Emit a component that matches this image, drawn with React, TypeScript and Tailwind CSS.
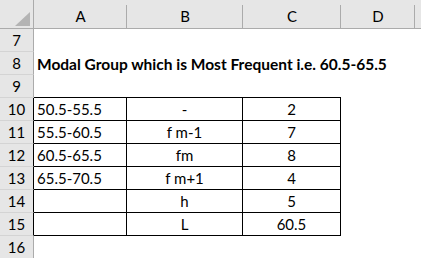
import React from "react";

const font = { fontFamily: "Lato, 'Liberation Sans', sans-serif" };

type Cell = { t?: string; align?: "l" | "c"; box?: boolean; bold?: boolean };

const rows: { n: number; cells: Cell[]; tableTop?: boolean }[] = [
  { n: 7, cells: [{}, {}, {}, {}] },
  { n: 8, cells: [{ t: "Modal Group which is Most Frequent i.e. 60.5-65.5", bold: true, align: "l" }, {}, {}, {}] },
  { n: 9, cells: [{}, {}, {}, {}], tableTop: true },
  { n: 10, cells: [{ t: "50.5-55.5", align: "l", box: true }, { t: "-", box: true }, { t: "2", box: true }, {}] },
  { n: 11, cells: [{ t: "55.5-60.5", align: "l", box: true }, { t: "f m-1", box: true }, { t: "7", box: true }, {}] },
  { n: 12, cells: [{ t: "60.5-65.5", align: "l", box: true }, { t: "fm", box: true }, { t: "8", box: true }, {}] },
  { n: 13, cells: [{ t: "65.5-70.5", align: "l", box: true }, { t: "f m+1", box: true }, { t: "4", box: true }, {}] },
  { n: 14, cells: [{ t: "", align: "l", box: true }, { t: "h", box: true }, { t: "5", box: true }, {}] },
  { n: 15, cells: [{ t: "", align: "l", box: true }, { t: "L", box: true }, { t: "60.5", box: true }, {}] },
  { n: 16, cells: [{}, {}, {}, {}] },
];

const widths = ["w-[93px]", "w-[116px]", "w-[98px]", "w-[74px]"];

export default function App() {
  return (
    <div className="w-[421px] h-[258px] overflow-hidden bg-white text-black" style={font}>
      {/* header */}
      <div className="flex h-[29px] bg-[#e6e6e6] border-b border-[#ababab]">
        <div className="w-[34px] h-[28px] shrink-0 border-r border-[#ababab] relative">
          <svg className="absolute left-[15px] top-[12px]" width="15" height="14" viewBox="0 0 15 14">
            <polygon points="15,0 15,14 0,14" fill="#b4b4b4" />
          </svg>
        </div>
        {["A", "B", "C", "D"].map((c, i) => (
          <div
            key={c}
            className={`${widths[i]} shrink-0 h-[28px] relative flex items-end justify-center pb-[4px] text-[15px] leading-none`}
          >
            {c}
            <div className="absolute right-0 top-[5px] bottom-0 w-px bg-[#ababab]" />
          </div>
        ))}
        <div className="flex-1" />
      </div>
      {rows.map((r) => (
        <div key={r.n} className="flex h-[23px]">
          <div
            className={`w-[34px] shrink-0 bg-[#e6e6e6] border-b border-[#d4d4d4] border-r ${
              r.cells[0].box ? "border-r-black" : "border-r-[#ababab]"
            } flex items-end justify-center pb-[3px] text-[15px] leading-none`}
          >
            {r.n}
          </div>
          {r.cells.map((c, i) => (
            <div
              key={i}
              className={`${widths[i]} shrink-0 h-[23px] flex items-end pb-[3px] leading-none whitespace-nowrap ${
                c.align === "l" ? "justify-start pl-[3px]" : "justify-center"
              } ${c.bold ? "font-bold text-[15.5px] overflow-visible relative z-10" : "text-[15px]"} ${
                c.box ? "border-r border-b border-black" : ""
              } ${r.tableTop && i < 3 ? "border-b border-black" : ""}`}
            >
              {c.t}
            </div>
          ))}
          <div className="flex-1" />
        </div>
      ))}
    </div>
  );
}
